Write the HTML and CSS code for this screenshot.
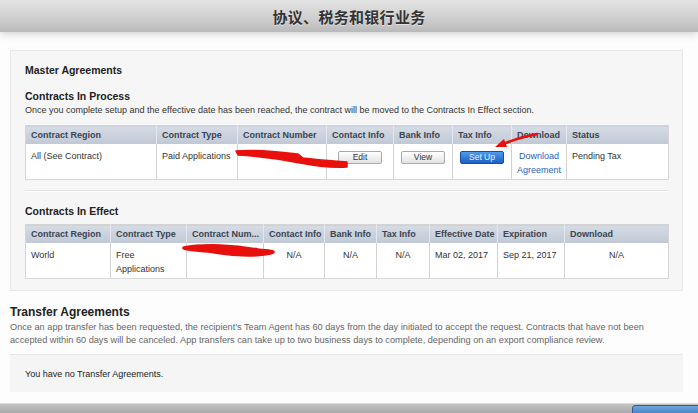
FILE: index.html
```html
<!DOCTYPE html>
<html lang="zh-CN">
<head>
    <meta charset="UTF-8">
    <meta name="viewport" content="width=device-width, initial-scale=1.0">
    <title>协议、税务和银行业务</title>
    <link rel="stylesheet" href="styles.css">
</head>
<body>
    <div class="topbar">
        <h1>协议、税务和银行业务</h1>
    </div>

    <div class="page">
        <div class="panel">
            <h2 class="panel-title">Master Agreements</h2>

            <h3 class="section-title">Contracts In Process</h3>
            <p class="section-desc">Once you complete setup and the effective date has been reached, the contract will be moved to the Contracts In Effect section.</p>

            <table class="grid process">
                <colgroup>
                    <col><col><col><col><col><col><col><col>
                </colgroup>
                <thead>
                    <tr>
                        <th>Contract Region</th>
                        <th>Contract Type</th>
                        <th>Contract Number</th>
                        <th>Contact Info</th>
                        <th>Bank Info</th>
                        <th>Tax Info</th>
                        <th>Download</th>
                        <th>Status</th>
                    </tr>
                </thead>
                <tbody>
                    <tr>
                        <td>All (See Contract)</td>
                        <td>Paid Applications</td>
                        <td></td>
                        <td class="center"><button class="btn">Edit</button></td>
                        <td class="center"><button class="btn">View</button></td>
                        <td class="center"><button class="btn btn-blue">Set Up</button></td>
                        <td class="center"><a href="#" class="link">Download Agreement</a></td>
                        <td>Pending Tax</td>
                    </tr>
                </tbody>
            </table>

            <div class="divider"></div>

            <h3 class="section-title">Contracts In Effect</h3>

            <table class="grid effect">
                <colgroup>
                    <col><col><col><col><col><col><col><col><col>
                </colgroup>
                <thead>
                    <tr>
                        <th>Contract Region</th>
                        <th>Contract Type</th>
                        <th>Contract Num...</th>
                        <th>Contact Info</th>
                        <th>Bank Info</th>
                        <th>Tax Info</th>
                        <th>Effective Date</th>
                        <th>Expiration</th>
                        <th>Download</th>
                    </tr>
                </thead>
                <tbody>
                    <tr>
                        <td>World</td>
                        <td>Free Applications</td>
                        <td></td>
                        <td class="center">N/A</td>
                        <td class="center">N/A</td>
                        <td class="center">N/A</td>
                        <td>Mar 02, 2017</td>
                        <td>Sep 21, 2017</td>
                        <td class="center">N/A</td>
                    </tr>
                </tbody>
            </table>
        </div>

        <div class="transfer">
            <h2 class="transfer-title">Transfer Agreements</h2>
            <p class="transfer-desc">Once an app transfer has been requested, the recipient's Team Agent has 60 days from the day initiated to accept the request. Contracts that have not been accepted within 60 days will be canceled. App transfers can take up to two business days to complete, depending on an export compliance review.</p>
            <div class="empty-box">You have no Transfer Agreements.</div>
        </div>
    </div>

    <div class="bottombar">
        <span class="bottom-btn"></span>
    </div>

    <!-- red marker annotations drawn over the screenshot -->
    <svg class="marks" viewBox="0 0 698 413" width="698" height="413">
        <path d="M236 151 C 255 149, 280 152, 298 154 L 303 158 C 318 160, 334 161, 347 162 L 347 167 C 330 168, 315 166, 300 163 C 280 159, 255 156, 238 155 Z" fill="#e8100c" stroke="#e8100c" stroke-width="1.5" stroke-linejoin="round"/>
        <path d="M537 134 C 522 137, 510 141, 501 145" fill="none" stroke="#e8100c" stroke-width="2.5" stroke-linecap="round"/>
        <path d="M495 147 L 504 139 L 507 147 Z" fill="#e8100c"/>
        <path d="M184 248 C 205 244, 235 246, 258 250 C 266 251, 271 251, 273 252 C 262 256, 238 256, 215 252 C 200 250, 188 250, 184 248 Z" fill="#e8100c" stroke="#e8100c" stroke-width="3.5" stroke-linejoin="round"/>
    </svg>
</body>
</html>
```

FILE: styles.css
```css
* {
    margin: 0;
    padding: 0;
    box-sizing: border-box;
}

body {
    position: relative;
    width: 698px;
    height: 413px;
    overflow: hidden;
    font-family: "Liberation Sans", Arial, sans-serif;
    font-size: 9px;
    color: #222;
    background: #fdfdfd;
}

.topbar {
    position: relative;
    z-index: 1;
    height: 32px;
    background: linear-gradient(#e4e4e4 0%, #c9c9c9 70%, #b9b9b9 100%);
    box-shadow: 0 2px 8px rgba(0, 0, 0, 0.18);
    display: flex;
    align-items: center;
    justify-content: center;
}

.topbar h1 {
    font-family: "Noto Sans CJK SC", "Noto Sans", sans-serif;
    font-size: 15px;
    font-weight: 700;
    color: #333;
    letter-spacing: 0.3px;
    text-shadow: 0 1px 0 rgba(255, 255, 255, 0.5);
}

.page {
    padding: 18px 15px 0 10px;
}

.panel {
    background: #f6f6f6;
    border: 1px solid #e8e8e8;
    padding: 13px 14px 11px 14px;
}

.panel-title {
    font-size: 10.5px;
    font-weight: 700;
    line-height: 13px;
    color: #222;
}

.section-title {
    margin-top: 12px;
    font-size: 10.5px;
    font-weight: 700;
    line-height: 14px;
    color: #222;
}

.section-desc {
    margin-top: 1px;
    line-height: 12px;
    color: #333;
}

.grid {
    width: 643px;
    table-layout: fixed;
    border-collapse: collapse;
    margin-top: 9px;
    background: #fff;
    border: 1px solid #d4d4d4;
}

.grid th {
    height: 18px;
    padding: 0 5px;
    text-align: left;
    font-weight: 700;
    color: #3a4452;
    white-space: nowrap;
    overflow: hidden;
    background: linear-gradient(#d6dce5, #bfc8d4);
    border-left: 1px solid #e4e8ee;
}

.grid td {
    height: 36px;
    padding: 5px 5px 0 5px;
    vertical-align: top;
    line-height: 14px;
    color: #333;
    border-left: 1px solid #d2d2d2;
    border-bottom: 1px solid #d8d8d8;
}

.grid th:first-child,
.grid td:first-child {
    border-left: none;
}

.grid td.center {
    text-align: center;
}

.process col:nth-child(1) { width: 131px; }
.process col:nth-child(2) { width: 81px; }
.process col:nth-child(3) { width: 89px; }
.process col:nth-child(4) { width: 67px; }
.process col:nth-child(5) { width: 59px; }
.process col:nth-child(6) { width: 59px; }
.process col:nth-child(7) { width: 55px; }
.process col:nth-child(8) { width: 102px; }

.effect col:nth-child(1) { width: 85px; }
.effect col:nth-child(2) { width: 76px; }
.effect col:nth-child(3) { width: 77px; }
.effect col:nth-child(4) { width: 61px; }
.effect col:nth-child(5) { width: 52px; }
.effect col:nth-child(6) { width: 53px; }
.effect col:nth-child(7) { width: 68px; }
.effect col:nth-child(8) { width: 67px; }
.effect col:nth-child(9) { width: 104px; }

.effect {
    margin-top: 6px;
}

.btn {
    display: inline-block;
    width: 44px;
    height: 13px;
    margin-top: 2px;
    font-family: "Liberation Sans", Arial, sans-serif;
    font-size: 8.5px;
    line-height: 11px;
    color: #333;
    background: linear-gradient(#ffffff, #e2e2e2);
    border: 1px solid #a9a9a9;
    border-radius: 2px;
}

.btn-blue {
    color: #e8f0ff;
    background: linear-gradient(#4e9bf0, #1d5fc4);
    border-color: #1b4f9e;
}

.link {
    color: #1f64b8;
    text-decoration: none;
}

.divider {
    margin-top: 10px;
    height: 2px;
    border-top: 1px solid #e2e2e2;
    border-bottom: 1px solid #fff;
}

.divider + .section-title {
    margin-top: 12px;
}

.transfer {
    margin-top: 13px;
}

.transfer-title {
    font-size: 12px;
    font-weight: 700;
    line-height: 16px;
    color: #222;
}

.transfer-desc {
    max-width: 650px;
    margin-top: 1px;
    font-size: 9.2px;
    line-height: 13px;
    color: #666;
}

.empty-box {
    margin-top: 7px;
    height: 38px;
    padding: 0 15px;
    display: flex;
    align-items: center;
    color: #222;
    background: #f5f5f5;
    border-top: 1px solid #e6e6e6;
}

.bottombar {
    position: absolute;
    left: 0;
    right: 0;
    bottom: 0;
    height: 10px;
    background: linear-gradient(#c4c4c4, #a8a8a8);
    border-top: 1px solid #dcdcdc;
}

.bottom-btn {
    position: absolute;
    left: 632px;
    top: 1px;
    width: 70px;
    height: 12px;
    border: 1px solid #2e5c9a;
    border-radius: 3px;
    background: linear-gradient(#6fa3dc, #3f77bf);
}

.marks {
    position: absolute;
    top: 0;
    left: 0;
    pointer-events: none;
}
```
